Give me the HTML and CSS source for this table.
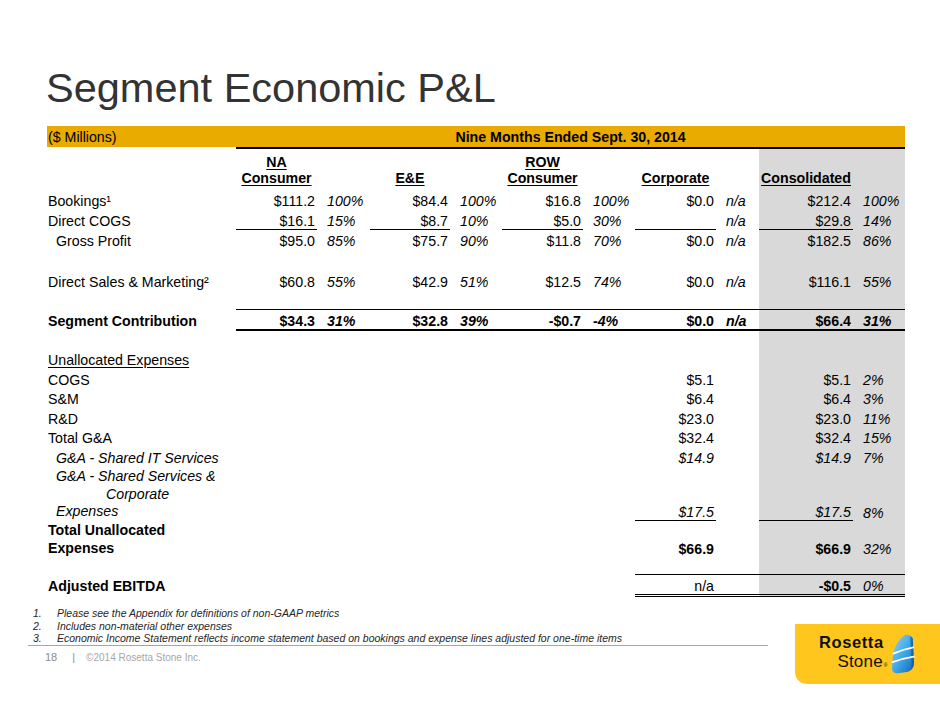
FILE: index.html
```html
<!DOCTYPE html>
<html lang="en">
<head>
<meta charset="utf-8">
<title>Segment Economic P&amp;L</title>
<link rel="stylesheet" href="styles.css">
</head>
<body>
<div class="slide">
  <h1 class="title">Segment Economic P&amp;L</h1>

  <table class="pl">
    <colgroup>
      <col class="w-lbl"><col class="w-v1"><col class="w-p1"><col class="w-v2"><col class="w-p2">
      <col class="w-v3"><col class="w-p3"><col class="w-v4"><col class="w-p4"><col class="w-v5"><col class="w-p5">
    </colgroup>
    <tr class="bar">
      <td class="bar-lbl">($ Millions)</td>
      <td class="bar-period" colspan="10">Nine Months Ended Sept. 30, 2014</td>
    </tr>
    <tr class="head">
      <td></td>
      <td class="h">NA<br>Consumer</td><td></td>
      <td class="h">E&amp;E</td><td></td>
      <td class="h">ROW<br>Consumer</td><td></td>
      <td class="h">Corporate</td><td></td>
      <td class="h c">Consolidated</td><td class="c"></td>
    </tr>
    <tr>
      <td class="lbl">Bookings¹</td>
      <td class="v">$111.2</td><td class="p">100%</td>
      <td class="v">$84.4</td><td class="p">100%</td>
      <td class="v">$16.8</td><td class="p">100%</td>
      <td class="v">$0.0</td><td class="p">n/a</td>
      <td class="v c">$212.4</td><td class="p c">100%</td>
    </tr>
    <tr>
      <td class="lbl">Direct COGS</td>
      <td class="v u">$16.1</td><td class="p">15%</td>
      <td class="v u">$8.7</td><td class="p">10%</td>
      <td class="v u">$5.0</td><td class="p">30%</td>
      <td class="v u"></td><td class="p">n/a</td>
      <td class="v c u">$29.8</td><td class="p c">14%</td>
    </tr>
    <tr>
      <td class="lbl ind">Gross Profit</td>
      <td class="v">$95.0</td><td class="p">85%</td>
      <td class="v">$75.7</td><td class="p">90%</td>
      <td class="v">$11.8</td><td class="p">70%</td>
      <td class="v">$0.0</td><td class="p">n/a</td>
      <td class="v c">$182.5</td><td class="p c">86%</td>
    </tr>
    <tr class="gap gap-a">
      <td></td><td></td><td></td><td></td><td></td><td></td><td></td><td></td><td></td><td class="c"></td><td class="c"></td>
    </tr>
    <tr>
      <td class="lbl">Direct Sales &amp; Marketing²</td>
      <td class="v">$60.8</td><td class="p">55%</td>
      <td class="v">$42.9</td><td class="p">51%</td>
      <td class="v">$12.5</td><td class="p">74%</td>
      <td class="v">$0.0</td><td class="p">n/a</td>
      <td class="v c">$116.1</td><td class="p c">55%</td>
    </tr>
    <tr class="gap gap-b">
      <td></td><td></td><td></td><td></td><td></td><td></td><td></td><td></td><td></td><td class="c"></td><td class="c"></td>
    </tr>
    <tr class="seg">
      <td class="lbl">Segment Contribution</td>
      <td class="v">$34.3</td><td class="p">31%</td>
      <td class="v">$32.8</td><td class="p">39%</td>
      <td class="v">-$0.7</td><td class="p">-4%</td>
      <td class="v">$0.0</td><td class="p">n/a</td>
      <td class="v c">$66.4</td><td class="p c">31%</td>
    </tr>
    <tr class="gap gap-c">
      <td></td><td></td><td></td><td></td><td></td><td></td><td></td><td></td><td></td><td class="c"></td><td class="c"></td>
    </tr>
    <tr>
      <td class="lbl"><span class="ul">Unallocated Expenses</span></td>
      <td></td><td></td><td></td><td></td><td></td><td></td><td></td><td></td><td class="c"></td><td class="c"></td>
    </tr>
    <tr>
      <td class="lbl">COGS</td>
      <td></td><td></td><td></td><td></td><td></td><td></td>
      <td class="v">$5.1</td><td></td>
      <td class="v c">$5.1</td><td class="p c">2%</td>
    </tr>
    <tr>
      <td class="lbl">S&amp;M</td>
      <td></td><td></td><td></td><td></td><td></td><td></td>
      <td class="v">$6.4</td><td></td>
      <td class="v c">$6.4</td><td class="p c">3%</td>
    </tr>
    <tr>
      <td class="lbl">R&amp;D</td>
      <td></td><td></td><td></td><td></td><td></td><td></td>
      <td class="v">$23.0</td><td></td>
      <td class="v c">$23.0</td><td class="p c">11%</td>
    </tr>
    <tr>
      <td class="lbl">Total G&amp;A</td>
      <td></td><td></td><td></td><td></td><td></td><td></td>
      <td class="v">$32.4</td><td></td>
      <td class="v c">$32.4</td><td class="p c">15%</td>
    </tr>
    <tr>
      <td class="lbl ind it">G&amp;A - Shared IT Services</td>
      <td></td><td></td><td></td><td></td><td></td><td></td>
      <td class="v it">$14.9</td><td></td>
      <td class="v c it">$14.9</td><td class="p c">7%</td>
    </tr>
    <tr class="tall3">
      <td class="lbl ind it"><span class="ln">G&amp;A - Shared Services &amp;</span><span class="ln ln-mid">Corporate</span><span class="ln">Expenses</span></td>
      <td></td><td></td><td></td><td></td><td></td><td></td>
      <td class="v it u btm">$17.5</td><td></td>
      <td class="v c it u btm">$17.5</td><td class="p c btm">8%</td>
    </tr>
    <tr class="tall2">
      <td class="lbl b">Total Unallocated<br>Expenses</td>
      <td></td><td></td><td></td><td></td><td></td><td></td>
      <td class="v b btm">$66.9</td><td></td>
      <td class="v c b btm">$66.9</td><td class="p c btm">32%</td>
    </tr>
    <tr class="gap gap-d">
      <td></td><td></td><td></td><td></td><td></td><td></td><td></td><td></td><td></td><td class="c"></td><td class="c"></td>
    </tr>
    <tr class="ebitda">
      <td class="lbl b">Adjusted EBITDA</td>
      <td></td><td></td><td></td><td></td><td></td><td></td>
      <td class="v tot">n/a</td><td class="tot"></td>
      <td class="v c b tot">-$0.5</td><td class="p c tot">0%</td>
    </tr>
  </table>

  <div class="bottom">
    <div class="left">
      <div class="notes">
        <div class="fn"><span class="num">1.</span><span>Please see the Appendix for definitions of non-GAAP metrics</span></div>
        <div class="fn"><span class="num">2.</span><span>Includes non-material other expenses</span></div>
        <div class="fn"><span class="num">3.</span><span>Economic Income Statement reflects income statement based on bookings and expense lines adjusted for one-time items</span></div>
      </div>
      <div class="foot">
        <span class="pg">18</span>
        <span class="sep">|</span>
        <span class="copy">©2014 Rosetta Stone Inc.</span>
      </div>
    </div>
    <div class="logo">
      <div class="logo-text">
        <span class="lt-1">Rosetta</span>
        <span class="lt-2">Stone<span class="reg">®</span></span>
      </div>
      <svg class="stone" viewBox="0 0 26 42" width="25" height="40" aria-hidden="true">
        <defs>
          <linearGradient id="sg" x1="0" y1="0" x2="1" y2="1">
            <stop offset="0" stop-color="#8fd8f8"/>
            <stop offset="0.55" stop-color="#3aa3e6"/>
            <stop offset="1" stop-color="#1466b8"/>
          </linearGradient>
          <linearGradient id="se" x1="0" y1="0" x2="1" y2="0">
            <stop offset="0" stop-color="#2b8fdc"/>
            <stop offset="1" stop-color="#0f4f9c"/>
          </linearGradient>
        </defs>
        <path d="M15.5 1 C19 0 22.5 1.5 23.8 5 L25 30 C25.2 35 22.5 38.5 17.5 40 L8.5 41.2 C4.5 41.6 2 39.5 2 36 L3 22 C4 14 9 5.5 15.5 1 Z" fill="url(#sg)"/>
        <path d="M21 2 C22.6 2.8 23.6 4 23.8 5 L25 30 C25.2 35 22.5 38.5 17.5 40 C21 37.5 22.4 34.5 22.3 30 Z" fill="url(#se)" opacity="0.85"/>
        <path d="M3.2 20.5 C10 17.5 17 15.5 24.4 14" stroke="#fff" stroke-width="2" fill="none" stroke-linecap="round"/>
        <path d="M2.6 29.5 C10 26.8 17.5 25 24.8 23.8" stroke="#fff" stroke-width="2" fill="none" stroke-linecap="round"/>
      </svg>
    </div>
  </div>
</div>
</body>
</html>
```

FILE: styles.css
```css
html, body {
  margin: 0;
  padding: 0;
  background: #fff;
}

.slide {
  width: 940px;
  height: 705px;
  overflow: hidden;
  position: relative;
  background: #fff;
  font-family: "Liberation Sans", Arial, sans-serif;
  color: #000;
}

.title {
  margin: 0;
  padding: 67px 0 0 46px;
  font-size: 41.5px;
  line-height: 42px;
  font-weight: normal;
  color: #333;
}

/* ---------- table ---------- */
.pl {
  margin: 17px 0 0 47px;
  width: 858px;
  table-layout: fixed;
  border-collapse: separate;
  border-spacing: 0;
  font-size: 14.2px;
}

.w-lbl { width: 189px; }
.w-v1 { width: 81px; }
.w-p1 { width: 53px; }
.w-v2 { width: 80px; }
.w-p2 { width: 52px; }
.w-v3 { width: 81px; }
.w-p3 { width: 52px; }
.w-v4 { width: 81px; }
.w-p4 { width: 43px; }
.w-v5 { width: 94px; }
.w-p5 { width: 52px; }

.pl td {
  padding: 3.6px 0 0 0;
  line-height: 16px;
  vertical-align: top;
  white-space: nowrap;
}

.bar td {
  background: #eaab00;
  padding: 2.5px 0;
  line-height: 16px;
}
.bar .bar-lbl {
  padding-left: 1px;
  border-bottom: 2px solid #fff;
}
.bar .bar-period {
  text-align: center;
  font-weight: bold;
  border-bottom: 2px solid #000;
}

.head td {
  padding: 4.5px 0 3px;
  line-height: 16.5px;
  vertical-align: bottom;
}
.head .h {
  text-align: center;
  font-weight: bold;
  text-decoration: underline;
  text-underline-offset: 2px;
  text-decoration-thickness: 1.3px;
  overflow: visible;
}

.c { background: #d9d9d9; }

.lbl { padding-left: 1px !important; }
.ind { padding-left: 9px !important; }
.it { font-style: italic; }
.b { font-weight: bold; }
.ul { text-decoration: underline; text-underline-offset: 2px; }

.v {
  text-align: right;
  padding-right: 2px !important;
}
.p {
  font-style: italic;
  padding-left: 10px !important;
}

.u { border-bottom: 1px solid #000; }

.gap td { padding: 0; line-height: 0; }
.gap-a td { height: 21.2px; }
.gap-b td { height: 18.8px; }
.gap-c td { height: 17px; }
.gap-d td { height: 17px; }

.seg td {
  font-weight: bold;
  border-top: 1px solid #000;
  border-bottom: 2px solid #000;
}
.seg td.lbl {
  border-top-color: transparent;
  border-bottom-color: transparent;
}

.tall3 td.lbl {
  padding-top: 2.2px;
  line-height: 17.5px;
}
.tall3 .ln { display: block; }
.tall3 .ln-mid { padding-left: 50px; }

.tall2 td.lbl {
  padding-top: 0;
  line-height: 18px;
}

.btm {
  vertical-align: bottom !important;
  padding-top: 0 !important;
}

.ebitda td {
  border-top: 1px solid transparent;
  border-bottom: 3px double transparent;
}
.ebitda td.tot {
  border-top-color: #000;
  border-bottom-color: #000;
}

/* ---------- bottom area ---------- */
.bottom {
  display: flex;
  align-items: flex-start;
  margin-top: 10px;
}

.left {
  margin-left: 28px;
  width: 740px;
}

.notes {
  padding-left: 5px;
  border-bottom: 1px solid #a6a6a6;
  font-size: 10.5px;
  line-height: 12.5px;
  font-style: italic;
  color: #262626;
}
.fn { display: flex; }
.num { width: 24px; flex: none; }

.foot {
  display: flex;
  align-items: baseline;
  margin-top: 4px;
  padding-left: 17px;
  line-height: 14px;
  color: #8c8c8c;
}
.pg { font-size: 11px; }
.sep { font-size: 11px; margin-left: 15px; }
.copy { font-size: 10px; margin-left: 11px; color: #a6a6a6; }

.logo {
  margin-left: auto;
  margin-top: 17px;
  width: 145px;
  height: 60px;
  box-sizing: border-box;
  padding-left: 24px;
  background: #ffc61e;
  border-bottom-left-radius: 12px;
  display: flex;
  align-items: center;
}
.logo-text {
  display: flex;
  flex-direction: column;
  align-items: flex-end;
  color: #111;
}
.lt-1 { font-size: 16.5px; line-height: 19px; font-weight: bold; letter-spacing: 0.6px; }
.lt-2 { font-size: 17px; line-height: 19px; letter-spacing: 0.2px; }
.reg { font-size: 5px; margin-right: -4px; margin-left: 1px; }
.stone { margin-left: 6px; display: block; }
```
